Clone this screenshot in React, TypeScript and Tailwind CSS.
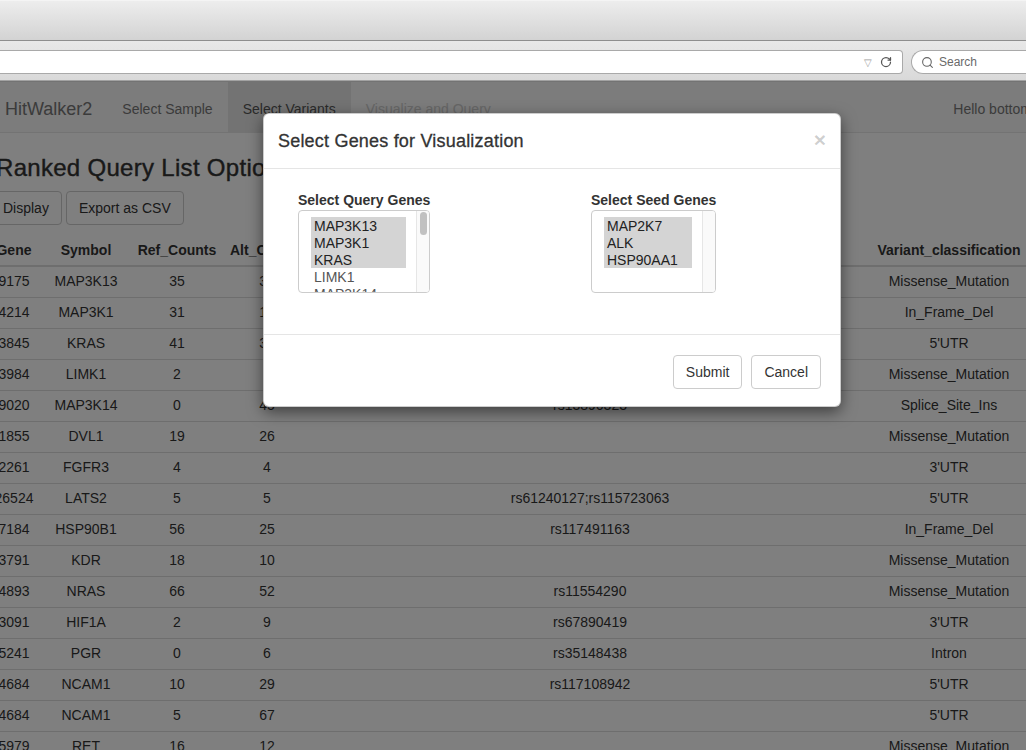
import { RotateCw, Search } from "lucide-react";

const rows = [
    ["9175", "MAP3K13", "35", "34", "", "Missense_Mutation"],
    ["4214", "MAP3K1", "31", "17", "", "In_Frame_Del"],
    ["3845", "KRAS", "41", "38", "", "5'UTR"],
    ["3984", "LIMK1", "2", "7", "", "Missense_Mutation"],
    ["9020", "MAP3K14", "0", "45", "rs13896323", "Splice_Site_Ins"],
    ["1855", "DVL1", "19", "26", "", "Missense_Mutation"],
    ["2261", "FGFR3", "4", "4", "", "3'UTR"],
    ["26524", "LATS2", "5", "5", "rs61240127;rs115723063", "5'UTR"],
    ["7184", "HSP90B1", "56", "25", "rs117491163", "In_Frame_Del"],
    ["3791", "KDR", "18", "10", "", "Missense_Mutation"],
    ["4893", "NRAS", "66", "52", "rs11554290", "Missense_Mutation"],
    ["3091", "HIF1A", "2", "9", "rs67890419", "3'UTR"],
    ["5241", "PGR", "0", "6", "rs35148438", "Intron"],
    ["4684", "NCAM1", "10", "29", "rs117108942", "5'UTR"],
    ["4684", "NCAM1", "5", "67", "", "5'UTR"],
    ["5979", "RET", "16", "12", "", "Missense_Mutation"],
];

const headers = ["Gene", "Symbol", "Ref_Counts", "Alt_Counts", "dbSNP", "Variant_classification", ""];

// grid columns: page is scrolled a little to the right, so the table starts at -20px
const cols = "grid grid-cols-[68px_76px_106px_74px_572px_146px_1fr]";

const BrowserChrome = () => (
    <div>
        <div className="h-[41px] border-t border-[#f4f4f4] border-b border-b-[#8e8e8e] bg-linear-to-b from-[#ededed] to-[#d3d3d3]" />
        <div className="flex h-[40px] items-start gap-[8px] border-b border-[#a2a2a2] bg-linear-to-b from-[#e8e8e8] to-[#d9d9d9] pt-[9px]">
            {/* address bar, left part is off screen */}
            <div className="flex h-[24px] w-[903px] shrink-0 items-center justify-end gap-[8px] rounded-r-[4px] border-y border-r border-[#a9a9a9] bg-white pr-[10px]">
                <span className="text-[10px] text-[#9a9a9a]">▽</span>
                <RotateCw size={12} strokeWidth={2.5} className="text-[#555]" />
            </div>
            <div className="flex h-[24px] flex-1 items-center gap-[5px] rounded-l-[12px] border-y border-l border-[#a9a9a9] bg-white pl-[9px]">
                <Search size={13} strokeWidth={2} className="text-[#666]" />
                <span className="text-[12px] text-[#6a6a6a]">Search</span>
            </div>
        </div>
    </div>
);

const Navbar = () => (
    <div className="flex h-[52px] w-[1057px] items-stretch whitespace-nowrap border-y border-[#e7e7e7] bg-[#f8f8f8] text-[14px] text-[#777]">
        <div className="-ml-[10px] flex items-center px-[15px] pt-[4px] text-[18px]">HitWalker2</div>
        <div className="flex items-center px-[15px] pt-[4px]">Select Sample</div>
        <div className="flex items-center bg-[#e7e7e7] px-[15px] pt-[4px] text-[#555]">Select Variants</div>
        <div className="flex items-center px-[15px] pt-[4px] text-[#ccc]">Visualize and Query</div>
        <div className="ml-auto flex items-center pr-[15px] pt-[4px]">Hello bottomly</div>
    </div>
);

const Page = () => (
    <div className="text-[#333]">
        <Navbar />
        <h3 className="-ml-[4px] mt-[22px] mb-[10px] whitespace-nowrap text-[24px] font-medium leading-[26px] tracking-[0.3px] [-webkit-text-stroke:0.4px_#333]">
            Ranked Query List Options
        </h3>
        <div className="-ml-[10px] flex gap-[4px]">
            <button className="h-[34px] rounded-[4px] border border-[#ccc] bg-white px-[12px] text-[14px]">Display</button>
            <button className="h-[34px] rounded-[4px] border border-[#ccc] bg-white px-[12px] text-[14px]">Export as CSV</button>
        </div>

        <div className="-ml-[20px] mt-[10px] w-[1060px] text-[14px] leading-[20px]">
            <div className={`${cols} border-b-2 border-[#ddd] py-[5px] font-bold`}>
                {headers.map((h, i) => (
                    <div key={i} className="whitespace-nowrap text-center">{h}</div>
                ))}
            </div>
            {rows.map((r, i) => (
                <div key={i} className={`${cols} border-b border-[#ddd] pt-[4px] pb-[6px]`}>
                    {r.map((c, j) => (
                        <div key={j} className="whitespace-nowrap text-center">{c}</div>
                    ))}
                    <div />
                </div>
            ))}
        </div>
    </div>
);

type ListProps = {
    items: string[];
    selected: number;
    width: string;
    rowWidth: string;
    thumb?: boolean;
};

const GeneList = ({ items, selected, width, rowWidth, thumb }: ListProps) => (
    <div className={`relative h-[83px] ${width} overflow-hidden rounded-[4px] border border-[#ccc] bg-white pl-[12px] pt-[6px]`}>
        {items.map((g, i) => (
            <div
                key={g}
                className={`h-[17px] ${rowWidth} pl-[3px] pt-[1px] text-[14px] leading-[17px] ${i < selected ? "bg-[#d4d4d4] text-[#222]" : "text-[#555]"}`}
            >
                {g}
            </div>
        ))}
        {/* scroll track */}
        <div className="absolute inset-y-0 right-0 w-[13px] border-l border-[#e6e6e6] bg-[#fafafa]">
            {thumb && <div className="mx-auto mt-[1px] h-[23px] w-[7px] rounded-full bg-[#c1c1c1]" />}
        </div>
    </div>
);

const Modal = () => (
    <div className="absolute left-[263px] top-[113px] w-[578px] rounded-[6px] border border-black/20 bg-white text-[#333] shadow-[0_5px_15px_rgba(0,0,0,0.5)]">
        <div className="flex h-[55px] items-center justify-between border-b border-[#e5e5e5] px-[14px] pt-[1px]">
            <h4 className="text-[18px] font-medium tracking-[0.2px] [-webkit-text-stroke:0.3px_#333]">Select Genes for Visualization</h4>
            <span className="-mt-[4px] text-[21px] font-bold leading-none text-black/20">×</span>
        </div>

        <div className="grid h-[165px] grid-cols-[293px_1fr] pl-[34px] pt-[21px]">
            <div>
                <div className="text-[14px] font-bold leading-[20px]">Select Query Genes</div>
                <GeneList
                    items={["MAP3K13", "MAP3K1", "KRAS", "LIMK1", "MAP3K14"]}
                    selected={3}
                    width="w-[132px]"
                    rowWidth="w-[95px]"
                    thumb
                />
            </div>
            <div>
                <div className="text-[14px] font-bold leading-[20px]">Select Seed Genes</div>
                <GeneList items={["MAP2K7", "ALK", "HSP90AA1"]} selected={3} width="w-[125px]" rowWidth="w-[88px]" />
            </div>
        </div>

        <div className="flex justify-end gap-[9px] border-t border-[#e5e5e5] px-[19px] pb-[17px] pt-[20px]">
            <button className="h-[34px] rounded-[4px] border border-[#ccc] bg-white px-[12px] text-[14px]">Submit</button>
            <button className="h-[34px] rounded-[4px] border border-[#ccc] bg-white px-[12px] text-[14px]">Cancel</button>
        </div>
    </div>
);

export default function App() {
    return (
        <div className="relative h-[750px] w-[1026px] overflow-hidden bg-white font-['Liberation_Sans',Arial,sans-serif]">
            <BrowserChrome />
            <div className="relative h-[669px] overflow-hidden">
                <Page />
                {/* modal backdrop */}
                <div className="absolute inset-0 bg-black/50" />
            </div>
            <Modal />
        </div>
    );
}
